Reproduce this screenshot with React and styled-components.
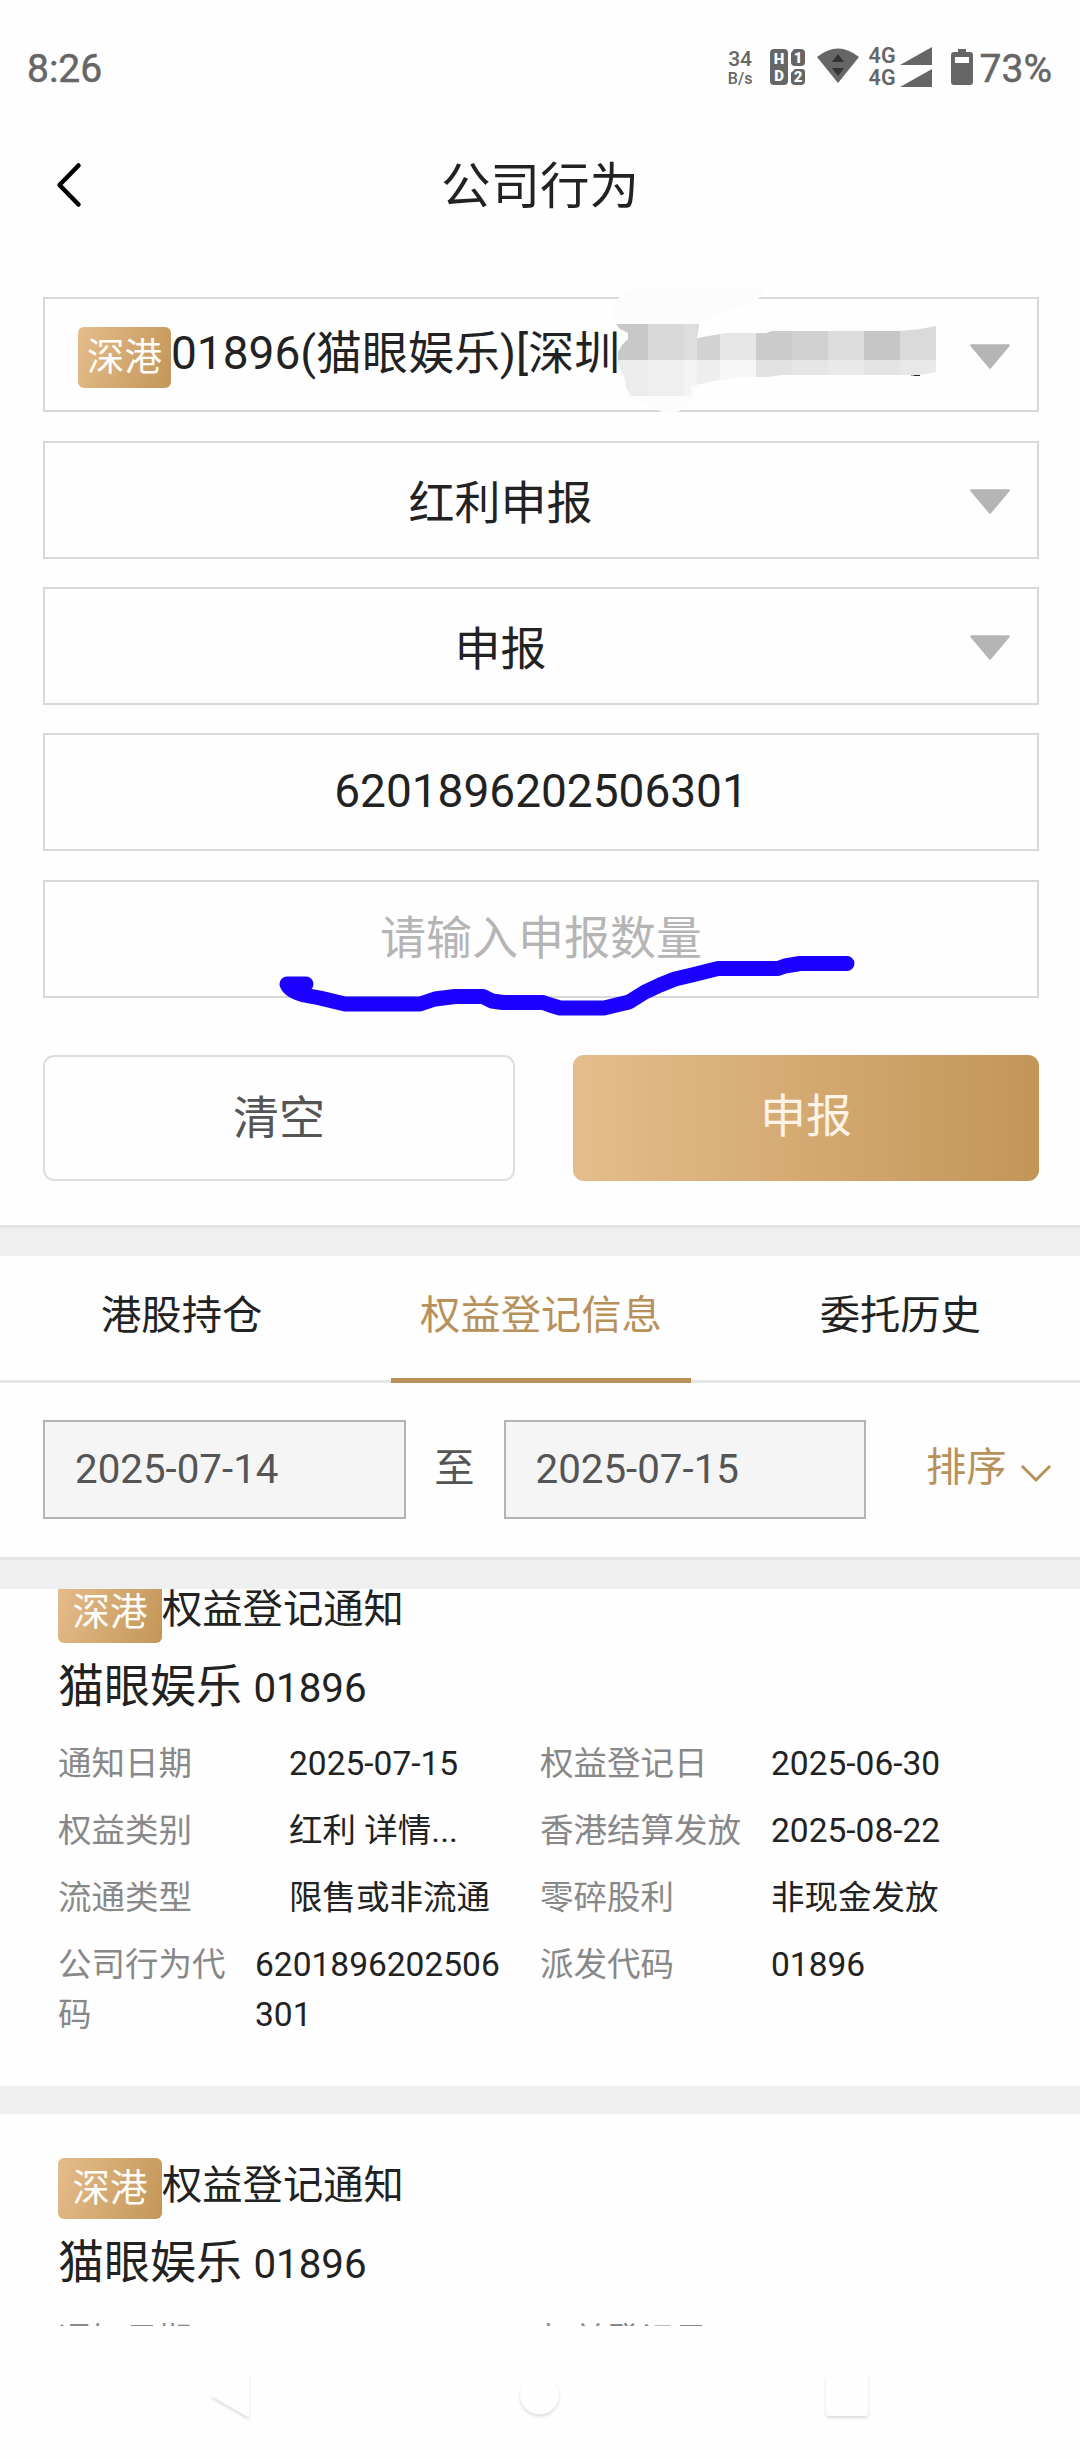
import { useState } from "react";
import styled, { createGlobalStyle } from "styled-components";

const TABS = ["港股持仓", "权益登记信息", "委托历史"];

const NOTICES = [
    { id: 1, name: "猫眼娱乐", code: "01896" },
    { id: 2, name: "猫眼娱乐", code: "01896" },
];

const DETAILS = [
    ["通知日期", "2025-07-15", "权益登记日", "2025-06-30"],
    ["权益类别", "红利 详情...", "香港结算发放", "2025-08-22"],
    ["流通类型", "限售或非流通", "零碎股利", "非现金发放"],
    ["公司行为代码", "6201896202506301", "派发代码", "01896"],
];

const MOSAIC = [
    [612, 36, "#c8c8c8", "#ececec"],
    [648, 36, "#d9d9d9", "#efefef"],
    [684, 13, "#dedede", "#f3f3f3"],
    [697, 23, "#d3d3d3", "#eeeeee"],
    [720, 36, "#e7e7e7", "#f7f7f7"],
    [756, 36, "#cccccc", "#e2e2e2"],
    [792, 36, "#d0d0d0", "#e5e5e5"],
    [828, 36, "#dcdcdc", "#e9e9e9"],
    [864, 36, "#c6c6c6", "#e4e4e4"],
    [900, 36, "#dadada", "#e8e8e8"],
];

const StatusIcons = () => (
    <Icons>
        <Speed>
            <SpeedValue>34</SpeedValue>
            <SpeedUnit>B/s</SpeedUnit>
        </Speed>
        <HdIcon width="35" height="36" viewBox="0 0 35 36">
            <rect width="18" height="36" rx="4" />
            <path d="M24 0h7a4 4 0 0 1 4 4v9a4 4 0 0 1-4 4h-6a4 4 0 0 1-4-4V4z" />
            <path d="M25 20h7a3 3 0 0 1 3 3v9a4 4 0 0 1-4 4h-6a4 4 0 0 1-4-4v-8z" />
            <text x="9" y="15">H</text>
            <text x="9" y="32">D</text>
            <text x="28" y="14">1</text>
            <text x="28" y="32.500">2</text>
        </HdIcon>
        <WifiIcon width="42" height="36" viewBox="0 0 42 36">
            <path d="M0 9Q21-8 42 9L21 35z" fill="#666" />
            <path d="M21 6l6 8H15zM21 28l-6-8h12z" fill="#333" />
        </WifiIcon>
        <Networks>
            <Network>4G</Network>
            <Network>4G</Network>
        </Networks>
        <SignalIcon width="32" height="40" viewBox="0 0 32 40">
            <path d="M32 0v18H0zM32 22v18H0z" fill="#666" />
        </SignalIcon>
        <BatteryIcon width="22" height="36" viewBox="0 0 22 36">
            <path d="M7 0h8v3h4a3 3 0 0 1 3 3v27a3 3 0 0 1-3 3H3a3 3 0 0 1-3-3V6a3 3 0 0 1 3-3h4z" fill="#666" />
            <path d="M4 8h14v6H4z" fill="#fefefe" />
        </BatteryIcon>
        <StatusText>73%</StatusText>
    </Icons>
);

const Arrow = () => (
    <ArrowSlot>
        <svg width="40" height="26" viewBox="0 0 40 26">
            <path d="M1.500 1.500h37L20 23.500z" fill="#b5b5b5" stroke="#b5b5b5" strokeWidth="2.500" strokeLinejoin="round" />
        </svg>
    </ArrowSlot>
);

// Hides the account number in the first selector
const AccountMask = () => (
    <Mask width="346" height="130" viewBox="612 286 346 130">
        <clipPath id="brush">
            <path d="M616 324H699L697 338L720 334L728 333H766L772 331H900L920 329L936 326V372L920 375H782L768 377H740L715 381L691 386V396H631L626 388L624 376L618 364V352L622 345L628 339V333L620 329Z" />
        </clipPath>
        <path d="M612 314Q614 288 650 288H765L761 297Q745 306 722 312L699 323V386L689 403Q682 413 668 413Q656 411 650 404Q628 402 626 388L618 364V352L628 339V333L616 325Z" fill="#fcfcfc" />
        <g clipPath="url(#brush)" shapeRendering="crispEdges">
            {MOSAIC.map(([x, width, top, bottom]) => (
                <g key={x}>
                    <rect x={x} y="324" width={width} height="36" fill={top} />
                    <rect x={x} y="360" width={width} height="36" fill={bottom} />
                </g>
            ))}
        </g>
        <path d="M911 375.5h3" stroke="#999" />
        <path d="M914 375.5h6" stroke="#222" />
    </Mask>
);

const Scribble = () => (
    <Ink width="600" height="70" viewBox="270 950 600 70">
        <path
            d="M306 983H287Q289 990 304 994L320 997L345 1003H420L435 998L455 995.5H483L492 1000L503 1001.5H543L550 1004L560 1007H604L629 1001L645 991L660 984L675 978L692 974L718 967.5H778L785 965L800 962.5H847"
            fill="none"
            stroke="#1c00ff"
            strokeWidth="15"
            strokeLinecap="round"
            strokeLinejoin="round"
        />
    </Ink>
);

const Notice = ({ name, code }) => (
    <Card>
        <CardTop>
            <Badge wide>深港</Badge>
            <CardTitle>权益登记通知</CardTitle>
        </CardTop>
        <Stock>
            {name} <StockCode>{code}</StockCode>
        </Stock>
        <Details>
            {DETAILS.map(([label, value, label2, value2]) => {
                const long = label.length > 5;
                return (
                    <Detail key={label}>
                        <Pair>
                            <Label narrow={long}>{label}</Label>
                            <Value narrow={long}>{value}</Value>
                        </Pair>
                        <Pair>
                            <Label>{label2}</Label>
                            <Value>{value2}</Value>
                        </Pair>
                    </Detail>
                );
            })}
        </Details>
    </Card>
);

export default function App() {
    const [tab, setTab] = useState(TABS[1]);

    return (
        <>
            <GlobalStyle />
            <Screen>
                <StatusBar>
                    <StatusText>8:26</StatusText>
                    <StatusIcons />
                </StatusBar>
                <Header>
                    <Back>
                        <svg width="28" height="48" viewBox="0 0 28 48">
                            <path d="M23.500 4.500L4.500 24L23.500 43.500" fill="none" stroke="#000" strokeWidth="4.500" strokeLinecap="round" strokeLinejoin="round" />
                        </svg>
                    </Back>
                    <HeaderTitle>公司行为</HeaderTitle>
                </Header>
                <Form>
                    <Field short>
                        <Account>
                            <Badge>深港</Badge>
                            <AccountName>01896(猫眼娱乐)[深圳</AccountName>
                        </Account>
                        <Arrow />
                        <AccountMask />
                    </Field>
                    <Field>
                        <Choice>红利申报</Choice>
                        <Arrow />
                    </Field>
                    <Field>
                        <Choice>申报</Choice>
                        <Arrow />
                    </Field>
                    <Field>
                        <Entry>6201896202506301</Entry>
                    </Field>
                    <Field>
                        <Entry empty>请输入申报数量</Entry>
                        <Scribble />
                    </Field>
                </Form>
                <Buttons>
                    <ClearButton>清空</ClearButton>
                    <SubmitButton>申报</SubmitButton>
                </Buttons>
                <Divider />
                <Tabs>
                    {TABS.map(t => (
                        <Tab key={t} active={t === tab ? 1 : 0} onClick={() => setTab(t)}>
                            <span>{t}</span>
                        </Tab>
                    ))}
                </Tabs>
                <Filter>
                    <DateBox>2025-07-14</DateBox>
                    <To>至</To>
                    <DateBox>2025-07-15</DateBox>
                    <Sort>
                        排序
                        <svg width="32" height="20" viewBox="0 0 32 20">
                            <path d="M2 3L16 17L30 3" fill="none" stroke="#b8915a" strokeWidth="3" />
                        </svg>
                    </Sort>
                </Filter>
                <Divider tall />
                <List>
                    {NOTICES.map(n => <Notice key={n.id} name={n.name} code={n.code} />)}
                </List>
                <NavBar>
                    <NavIcon width="44" height="48" viewBox="0 0 44 48">
                        <path d="M3 22L38 2Q41 0 41 4V40Q41 44 38 42Z" />
                    </NavIcon>
                    <NavIcon width="44" height="48" viewBox="0 0 44 48">
                        <circle cx="22.500" cy="21" r="19.500" />
                    </NavIcon>
                    <NavIcon width="44" height="48" viewBox="0 0 44 48">
                        <rect x="1" y="1" width="42" height="41" rx="3" />
                    </NavIcon>
                </NavBar>
            </Screen>
        </>
    );
}

const GlobalStyle = createGlobalStyle`
    * {
        box-sizing: border-box;
    }
    body {
        margin: 0;
        background-color: #fefefe;
        font-family: Roboto, "Noto Sans CJK SC", sans-serif;
        color: #222222;
    }
    button {
        font-family: inherit;
        padding: 0;
    }
    svg {
        display: block;
        flex-shrink: 0;
    }
`;

const Screen = styled.div`
    display: flex;
    flex-direction: column;
    width: 1080px;
    height: 2460px;
    overflow: hidden;
    background-color: #fefefe;
`;

const StatusBar = styled.div`
    display: flex;
    align-items: center;
    justify-content: space-between;
    height: 137px;
    padding: 0 28px 0 27px;
    color: #666666;
`;

const StatusText = styled.div`
    padding-top: 1px;
    font-size: 39px;
    line-height: 48px;
    -webkit-text-stroke: 0.5px #666666;
`;

const Icons = styled.div`
    display: flex;
    align-items: center;
`;

const Speed = styled.div`
    width: 25px;
    margin-right: 17px;
    text-align: center;
    font-weight: 500;
`;

const SpeedValue = styled.div`
    font-size: 21px;
    line-height: 20px;
`;

const SpeedUnit = styled.div`
    font-size: 16px;
    line-height: 19px;
`;

const HdIcon = styled.svg`
    margin: -4px 12px 0 0;
    overflow: visible;
    fill: #666666;
    text {
        fill: #fefefe;
        font-size: 15px;
        font-weight: 900;
        text-anchor: middle;
    }
`;

const WifiIcon = styled.svg`
    margin: -5px 10px 0 0;
`;

const Networks = styled.div`
    width: 28px;
    margin: -3px 3px 0 0;
`;

const Network = styled.div`
    font-size: 21.5px;
    font-weight: 600;
    line-height: 22px;
`;

const SignalIcon = styled.svg`
    margin: -3px 19px 0 0;
`;

const BatteryIcon = styled.svg`
    margin: -3px 7px 0 0;
`;

const Header = styled.div`
    display: grid;
    grid-template-columns: 120px 1fr 120px;
    align-items: center;
    height: 101px;
    margin-bottom: 59px;
`;

const Back = styled.div`
    padding: 0 0 5px 55px;
`;

const HeaderTitle = styled.h1`
    margin: 0;
    padding-bottom: 2px;
    font-size: 49.5px;
    font-weight: 400;
    line-height: 70px;
    text-align: center;
`;

const Form = styled.div`
    display: flex;
    flex-direction: column;
    gap: 28.3px;
    padding: 0 41px 0 43px;
`;

const Field = styled.div`
    position: relative;
    display: flex;
    align-items: center;
    height: ${props => props.short ? "115.4px" : "118px"};
    border: 2px solid #d8d8d8;
    font-size: 46px;
    line-height: 60px;
`;

const Account = styled.div`
    display: flex;
    flex: 1;
    align-items: center;
    padding-left: 33px;
    white-space: nowrap;
`;

const Badge = styled.div`
    flex-shrink: 0;
    width: ${props => props.wide ? "104px" : "93px"};
    height: 61px;
    margin-top: ${props => props.wide ? "0" : "6px"};
    border-radius: 6px;
    background-image: linear-gradient(110deg, #e5bd8c, #c39557);
    font-size: 37.5px;
    line-height: 60px;
    text-align: center;
    color: #fffdf8;
`;

const AccountName = styled.div`
    margin-top: -3px;
`;

const Choice = styled.div`
    flex: 1;
    padding: 6px 0 0 2px;
    text-align: center;
`;

const Entry = styled.div`
    flex: 1;
    padding-bottom: 2px;
    text-align: center;
    color: ${props => props.empty ? "#b5b5b5" : "#222222"};
`;

const ArrowSlot = styled.div`
    width: 83px;
    padding: 5px 0 0 16px;
`;

const Mask = styled.svg`
    position: absolute;
    left: 567px;
    top: -13px;
`;

const Ink = styled.svg`
    position: absolute;
    left: 225px;
    top: 69px;
`;

const Buttons = styled.div`
    display: flex;
    justify-content: space-between;
    padding: 57.4px 41px 44px 43px;
`;

const ClearButton = styled.button`
    width: 472px;
    height: 126px;
    border: 2px solid #dddddd;
    border-radius: 11px;
    background-color: #fefefe;
    font-size: 46px;
    line-height: 60px;
    color: #555555;
`;

const SubmitButton = styled(ClearButton)`
    width: 466px;
    padding-bottom: 3px;
    border: none;
    background-image: linear-gradient(90deg, #e5bd8c, #c39557);
    color: #fdf3e6;
`;

const Divider = styled.div`
    flex-shrink: 0;
    height: ${props => props.tall ? "32px" : "31px"};
    border-top: 3px solid #e5e5e5;
    background-color: #efefef;
`;

const Tabs = styled.div`
    display: flex;
    height: 127px;
    padding-left: 2px;
    border-bottom: 3px solid #e5e6e6;
`;

const Tab = styled.div`
    display: flex;
    flex: 1;
    justify-content: center;
    font-size: 40.3px;
    line-height: 119px;
    color: ${props => props.active ? "#b8915a" : "#222222"};
    span {
        width: 300px;
        height: 127px;
        text-align: center;
        border-bottom: ${props => props.active ? "5px solid #b8915a" : "none"};
    }
`;

const Filter = styled.div`
    display: flex;
    align-items: center;
    height: 174px;
    padding-left: 43px;
    font-size: 40.3px;
    line-height: 56px;
    color: #555555;
`;

const DateBox = styled.div`
    width: 362.5px;
    height: 99px;
    padding-left: 30px;
    border: 2px solid #b4b4b4;
    background-color: #f5f5f5;
    line-height: 95px;
`;

const To = styled.div`
    width: 98px;
    padding-bottom: 1px;
    text-align: center;
`;

const Sort = styled.div`
    display: flex;
    align-items: center;
    gap: 13px;
    margin: -3px 0 0 60px;
    color: #b8915a;
    svg {
        margin-top: 10px;
    }
`;

const List = styled.div`
    height: 737px;
    overflow: hidden;
`;

const Card = styled.div`
    height: 576px;
    padding: 44px 58px 0;
    border-bottom: 28px solid #efefef;
    &:first-child {
        margin-top: -51px;
    }
`;

const CardTop = styled.div`
    display: flex;
    align-items: center;
`;

const CardTitle = styled.div`
    margin-top: -4px;
    font-size: 40.3px;
    line-height: 56px;
`;

const Stock = styled.div`
    margin-top: 9px;
    font-size: 46px;
    line-height: 68px;
`;

const StockCode = styled.span`
    font-size: 40.3px;
`;

const Details = styled.div`
    display: flex;
    flex-direction: column;
    gap: 17px;
    margin-top: 16px;
    font-size: 33.5px;
    line-height: 50px;
`;

const Detail = styled.div`
    display: flex;
`;

const Pair = styled.div`
    display: flex;
    width: 483.5px;
`;

const Label = styled.div`
    flex-shrink: 0;
    width: ${props => props.narrow ? "197px" : "231px"};
    padding-right: ${props => props.narrow ? "20px" : "0"};
    color: #888888;
`;

const Value = styled.div`
    width: ${props => props.narrow ? "250px" : "auto"};
    word-break: break-all;
`;

const NavBar = styled.div`
    display: flex;
    justify-content: space-between;
    align-items: center;
    height: 134px;
    padding: 10px 211px 0 208px;
`;

const NavIcon = styled.svg`
    fill: #fefefe;
    filter: drop-shadow(0 2px 1.5px rgba(0, 0, 0, 0.14));
    overflow: visible;
`;
